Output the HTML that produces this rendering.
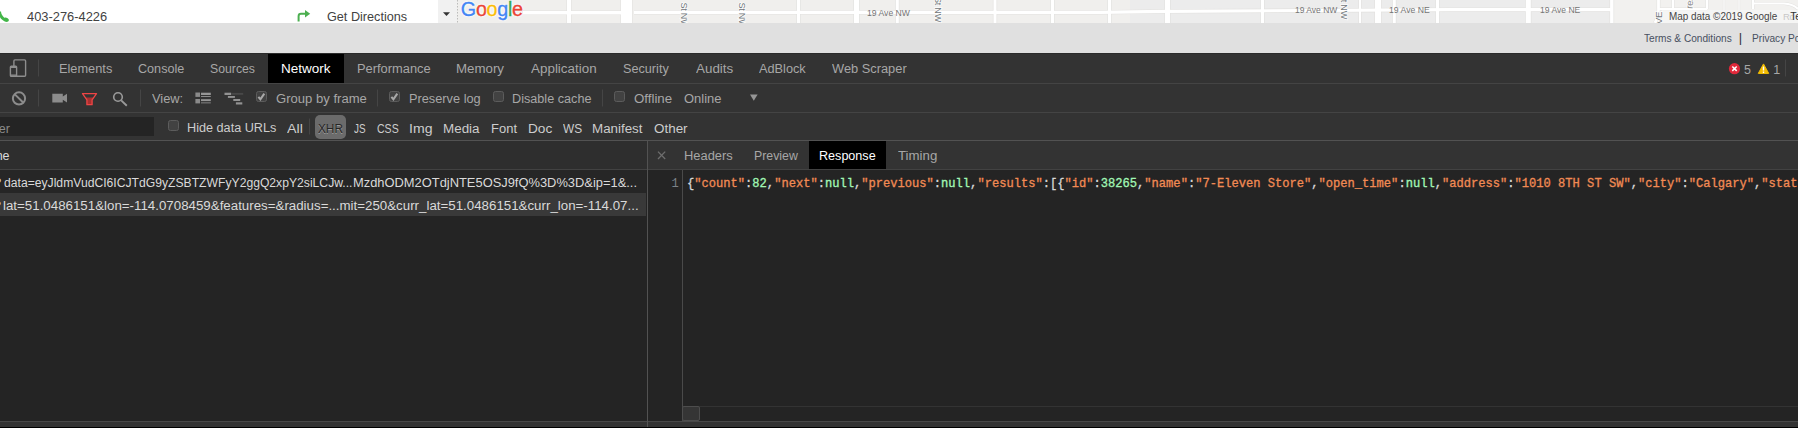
<!DOCTYPE html>
<html><head><meta charset="utf-8"><title>DevTools</title>
<style>
html,body{margin:0;padding:0;}
body{width:1798px;height:428px;overflow:hidden;position:relative;background:#242424;font-family:"Liberation Sans",sans-serif;}
.a{position:absolute;}
.t{position:absolute;white-space:nowrap;line-height:20px;font-weight:400;transform-origin:0 50%;}
.s{font-family:"Liberation Sans",sans-serif;}
.m{font-family:"Liberation Mono",monospace;}
</style></head><body>
<!-- page area -->
<div class="a" style="left:0;top:0;width:438px;height:23px;background:#ffffff;"></div>
<div class="a" style="left:438px;top:0;width:19px;height:23px;background:#f1f1f1;"></div>
<div class="a" style="left:0;top:23px;width:1798px;height:30px;background:#e0e0e0;"></div>
<!-- map svg -->
<svg class="a" style="left:457px;top:0" width="1341" height="23" viewBox="457 0 1341 23">
<rect x="457" y="0" width="1341" height="23" fill="#f0efed"/>
<rect x="1130" y="0" width="484" height="23" fill="#ececec"/>
<rect x="1614" y="0" width="184" height="23" fill="#f2f1ef"/>
<g stroke="#e2e1df" fill="none">
<path d="M523 12.7H621" stroke-width="4.6"/>
<path d="M569 0V23" stroke-width="5.2"/>
<path d="M626.5 0V23" stroke-width="12.2"/>
<path d="M634 12.4H1100L1165 11.4L1450 9.7H1612" stroke-width="4.4"/>
<path d="M798.5 0V23M897.3 0V23M995 0V23M1052.5 0V23M1109.5 0V23M1262.5 0V23M1394.3 0V23M1437.5 0V23" stroke-width="4.2"/>
<path d="M856.5 0V23M1167.5 0V23M1528.3 0V23" stroke-width="6.2"/>
<path d="M1360 0V23" stroke-width="3.2"/>
<path d="M1378 0V23" stroke-width="7.2"/>
<path d="M1611.8 0V23" stroke-width="4.6"/>
<path d="M1658.5 0V8Q1659 15 1655 23" stroke-width="3.8"/>
<path d="M1659 9H1707M1673 0V9M1707 0V9M1753 0V9M1754 3.5H1784Q1793 4 1798 9" stroke-width="3.2"/>
<path d="M1724 0V23M1739 0V23" stroke-width="2.2"/>
</g>
<g stroke="#ffffff" fill="none">
<path d="M523 12.7H621" stroke-width="3.4"/>
<path d="M569 0V23" stroke-width="4"/>
<path d="M626.5 0V23" stroke-width="11"/>
<path d="M634 12.4H1100L1165 11.4L1450 9.7H1612" stroke-width="3.2"/>
<path d="M798.5 0V23M897.3 0V23M995 0V23M1052.5 0V23M1109.5 0V23M1262.5 0V23M1394.3 0V23M1437.5 0V23" stroke-width="3"/>
<path d="M856.5 0V23M1167.5 0V23M1528.3 0V23" stroke-width="5"/>
<path d="M1360 0V23" stroke-width="2"/>
<path d="M1378 0V23" stroke-width="6"/>
<path d="M1611.8 0V23" stroke-width="3.4"/>
<path d="M1658.5 0V8Q1659 15 1655 23" stroke-width="2.8"/>
<path d="M1659 9H1707M1673 0V9M1707 0V9M1753 0V9M1754 3.5H1784Q1793 4 1798 9" stroke-width="2.2"/>
<path d="M1724 0V23M1739 0V23" stroke-width="1.2"/>
</g>
<rect x="1662" y="10" width="136" height="13" fill="#f5f5f5" opacity="0.75"/>
<g fill="#70767a" font-family="Liberation Sans, sans-serif" font-size="9.1" letter-spacing="-0.25" stroke="#fff" stroke-width="1.6" paint-order="stroke" stroke-opacity="0.8">
<text transform="translate(681 2.5) rotate(90)">St NW</text>
<text transform="translate(738.6 2.5) rotate(90)">St NW</text>
<text transform="translate(934.5 -3) rotate(90)">St NW</text>
<text transform="translate(1340.5 -6) rotate(90)">St NW</text>
<text transform="translate(1662 24.3) rotate(-90)" font-size="9.8">VE</text>
<text transform="translate(1692.5 9) rotate(-86)" fill="#8a8a8a" font-size="9.6">res</text>
<text x="1783" y="19.8" fill="#c8c8c8" font-size="9.5" stroke="none">Rd</text>
</g>
<path d="M457 0V23" stroke="#9a9a9a" stroke-width="1.2" stroke-dasharray="1.5 1.5"/>
</svg>
<!-- Google logo -->
<div class="t s" style="left:460.8px;top:-6.1px;font-size:19.8px;letter-spacing:-0.3px;line-height:30px;-webkit-text-stroke:0.35px;text-shadow:0 0 2px #fff,0 0 2px #fff,0 0 3px #fff;"><span style="color:#4285f4">G</span><span style="color:#ea4335">o</span><span style="color:#fbbc05">o</span><span style="color:#4285f4">g</span><span style="color:#34a853">l</span><span style="color:#ea4335">e</span></div>
<!-- devtools -->
<div class="a" style="left:0;top:53px;width:1798px;height:88px;background:#333333;"></div>
<div class="a" style="left:0;top:53px;width:1798px;height:1px;background:#2b2b2b;"></div>
<div class="a" style="left:0;top:83px;width:1798px;height:1px;background:#444444;"></div>
<div class="a" style="left:0;top:112px;width:1798px;height:1px;background:#444444;"></div>
<div class="a" style="left:0;top:140px;width:1798px;height:1px;background:#525252;"></div>
<!-- selected tab -->
<div class="a" style="left:268px;top:54px;width:76px;height:29px;background:#000;"></div>
<!-- filter input -->
<div class="a" style="left:0;top:117px;width:154px;height:19px;background:#242424;"></div>
<!-- XHR pill -->
<div class="a" style="left:315px;top:115px;width:31px;height:24px;background:#6b6b6b;border-radius:5px;"></div>
<!-- grid header -->
<div class="a" style="left:0;top:141px;width:647px;height:28px;background:#2e2e2e;"></div>
<div class="a" style="left:648px;top:141px;width:1150px;height:28px;background:#333333;"></div>
<div class="a" style="left:0;top:169px;width:1798px;height:1px;background:#424242;"></div>
<div class="a" style="left:0;top:170px;width:646px;height:23px;background:#262626;"></div>
<div class="a" style="left:0;top:193px;width:646px;height:23px;background:#393939;"></div>
<!-- splitter -->
<div class="a" style="left:647px;top:141px;width:1px;height:286px;background:#525252;z-index:2"></div>
<!-- response tab selected -->
<div class="a" style="left:809px;top:141px;width:77px;height:28px;background:#000;"></div>
<!-- gutter border -->
<div class="a" style="left:682px;top:170px;width:1px;height:251px;background:#4a4a4a;"></div>
<!-- h scrollbar -->
<div class="a" style="left:684px;top:406px;width:1114px;height:1px;background:#333;"></div>
<div class="a" style="left:682px;top:406px;width:18px;height:15px;background:#353535;border:1px solid #4d4d4d;border-radius:2px;box-sizing:border-box;"></div>
<!-- bottom bar -->
<div class="a" style="left:0;top:421px;width:1798px;height:7px;background:#333;"></div>
<div class="a" style="left:0;top:421px;width:1798px;height:1px;background:#484848;"></div>
<div class="a" style="left:0;top:427px;width:1798px;height:1px;background:#000;"></div>
<svg class="a" style="left:0;top:0" width="1798" height="428" viewBox="0 0 1798 428">
<!-- phone -->
<path d="M0 11.4L1 11.6C1.1 14 2.3 16.1 4.3 17.7L5.3 17.5C6.4 17.3 7.7 18.1 8.6 19.2C9.1 19.9 8.9 20.9 8.1 21.5C7.1 22.1 5.9 22 4.8 21.5C2.6 20.4 0.9 18.9 0 17.3Z" fill="#43b649"/>
<!-- directions arrow -->
<path d="M298.6 21.6V16.2Q298.6 13.8 301 13.8H305.6" fill="none" stroke="#4caf50" stroke-width="2"/>
<path d="M305 10L310.2 13.8L305 17.6Z" fill="#4caf50"/>
<!-- dropdown arrow -->
<path d="M443 12.2H450L446.5 16Z" fill="#333"/>
<!-- device icon -->
<rect x="13.9" y="59.9" width="11.7" height="16.3" rx="1" fill="none" stroke="#8e8e8e" stroke-width="1.4"/>
<rect x="10.4" y="66.3" width="6.2" height="9.9" rx="0.8" fill="#333" stroke="#8e8e8e" stroke-width="1.4"/>
<path d="M10.4 67.4H16.6M10.4 75.2H16.6" stroke="#8e8e8e" stroke-width="1.2"/>
<!-- separators -->
<g stroke="#454545" stroke-width="1">
<path d="M38.5 59.5V76.5M1785.5 59.5V76.5M38.5 89.5V106.5M140.5 89.5V106.5M377.5 89.5V106.5M602.5 89.5V106.5M309.5 118.5V134.5"/>
</g>
<!-- clear icon -->
<circle cx="19" cy="98.4" r="6.1" fill="none" stroke="#8c8c8c" stroke-width="2"/>
<path d="M14.6 94.1L23.4 102.7" stroke="#8c8c8c" stroke-width="2"/>
<!-- camera -->
<path d="M52.3 93.8H62.8V96.6L67 93.8V102.6L62.8 99.8V102.6H52.3Z" fill="#8c8c8c"/>
<!-- filter (red) -->
<path d="M85.4 97.6H93.6L92 99.8V104.6H87V99.8Z" fill="#a83030"/>
<path d="M82.5 93.6H96.5L92.1 99.8V104.7H86.9V99.8Z" fill="none" stroke="#ee4545" stroke-width="1.3" stroke-linejoin="round"/>
<!-- search -->
<circle cx="118" cy="97" r="4.3" fill="none" stroke="#9a9a9a" stroke-width="1.6"/>
<path d="M121.2 100.4L126.8 105.8" stroke="#9a9a9a" stroke-width="1.9"/>
<!-- list icon -->
<g fill="#8a8a8a">
<rect x="195.4" y="92.5" width="4.6" height="4.4"/><rect x="201" y="92.7" width="9.8" height="2.3" fill="#969696"/><rect x="201" y="96" width="9.8" height="0.9" fill="#969696"/>
<rect x="195.4" y="99" width="4.6" height="4.4"/><rect x="201" y="99.2" width="9.8" height="1.9" fill="#969696"/><rect x="201" y="102.3" width="9.8" height="1.1" fill="#7c7c7c"/>
</g>
<!-- waterfall icon -->
<g>
<rect x="224.5" y="92.7" width="6.6" height="2.3" fill="#929292"/><rect x="231.1" y="92.9" width="12.1" height="1.9" fill="#484848"/>
<rect x="227.9" y="96" width="7" height="1.9" fill="#929292"/>
<rect x="233.3" y="99" width="6.9" height="2" fill="#929292"/>
<rect x="235.9" y="102.3" width="6.4" height="2.2" fill="#929292"/>
</g>
<!-- online dropdown triangle -->
<path d="M750 94.4H757.6L753.8 100.8Z" fill="#969696"/>
<!-- checkboxes -->
<g fill="#424242" stroke="#5c5c5c" stroke-width="1">
<rect x="256.5" y="91.5" width="10" height="10" rx="2"/>
<rect x="389.5" y="91.5" width="10" height="10" rx="2"/>
<rect x="493.5" y="91.5" width="10" height="10" rx="2"/>
<rect x="614.5" y="91.5" width="10" height="10" rx="2"/>
<rect x="168.5" y="120.5" width="10" height="10" rx="2"/>
</g>
<g fill="none" stroke="#a8a8a8" stroke-width="2.1">
<path d="M258.4 96.9L260.4 99.3L264.3 93.7"/>
<path d="M391.4 96.9L393.4 99.3L397.3 93.7"/>
</g>
<!-- close x -->
<path d="M658 151.6L665.2 159M665.2 151.6L658 159" stroke="#6e6e6e" stroke-width="1.3"/>
<!-- error icon -->
<circle cx="1734.5" cy="68.7" r="5.6" fill="#e0283a"/>
<path d="M1732.3 66.5L1736.7 70.9M1736.7 66.5L1732.3 70.9" stroke="#fff" stroke-width="1.5"/>
<!-- warning icon -->
<path d="M1763.5 63.9L1768.7 73.4H1758.3Z" fill="#f4bd00" stroke="#f4bd00" stroke-width="1" stroke-linejoin="round"/>
<path d="M1763.5 66.6V70.6M1763.5 71.6V73" stroke="#fff" stroke-width="1.4"/>
</svg>

<span class="t s" style="left:27.00px;top:6.50px;font-size:13px;color:#424242;letter-spacing:0.000px;transform:scaleX(0.9897);">403-276-4226</span>
<span class="t s" style="left:327.40px;top:6.50px;font-size:13px;color:#424242;letter-spacing:0.000px;transform:scaleX(0.9727);">Get Directions</span>
<span class="t s" style="left:1644.10px;top:27.98px;font-size:11.6px;color:#485060;letter-spacing:0.000px;transform:scaleX(0.8727);">Terms &amp; Conditions</span>
<span class="t s" style="left:1738.75px;top:28.00px;font-size:13px;color:#333;letter-spacing:0.000px;">|</span>
<span class="t s" style="left:1752.00px;top:27.98px;font-size:11.6px;color:#485060;letter-spacing:0.000px;transform:scaleX(0.8750);">Privacy Policy</span>
<span class="t s" style="left:1669.10px;top:7.00px;font-size:10.4px;color:#444;letter-spacing:0.000px;transform:scaleX(0.9543);">Map data ©2019 Google</span>
<span class="t s" style="left:1790.15px;top:7.00px;font-size:10.4px;color:#333;letter-spacing:0.000px;">Te</span>
<span class="t s" style="left:866.90px;top:2.88px;font-size:9.3px;color:#757575;letter-spacing:0.000px;transform:scaleX(0.9262);">19 Ave NW</span>
<span class="t s" style="left:1294.50px;top:0.28px;font-size:9.3px;color:#757575;letter-spacing:0.000px;transform:scaleX(0.9135);">19 Ave NW</span>
<span class="t s" style="left:1388.50px;top:-0.32px;font-size:9.3px;color:#757575;letter-spacing:0.000px;transform:scaleX(0.9303);">19 Ave NE</span>
<span class="t s" style="left:1539.90px;top:-0.32px;font-size:9.3px;color:#757575;letter-spacing:0.000px;transform:scaleX(0.9212);">19 Ave NE</span>
<span class="t s" style="left:58.58px;top:58.67px;font-size:12.5px;color:#a7a7a7;letter-spacing:0.000px;transform:scaleX(1.0225);">Elements</span>
<span class="t s" style="left:137.60px;top:58.67px;font-size:12.5px;color:#a7a7a7;letter-spacing:0.000px;transform:scaleX(1.0085);">Console</span>
<span class="t s" style="left:210.20px;top:58.67px;font-size:12.5px;color:#a7a7a7;letter-spacing:0.000px;transform:scaleX(0.9801);">Sources</span>
<span class="t s" style="left:356.87px;top:58.67px;font-size:12.5px;color:#a7a7a7;letter-spacing:0.000px;transform:scaleX(1.0297);">Performance</span>
<span class="t s" style="left:455.84px;top:58.67px;font-size:12.5px;color:#a7a7a7;letter-spacing:0.000px;transform:scaleX(1.0626);">Memory</span>
<span class="t s" style="left:531.20px;top:58.67px;font-size:12.5px;color:#a7a7a7;letter-spacing:0.000px;transform:scaleX(1.0735);">Application</span>
<span class="t s" style="left:623.40px;top:58.67px;font-size:12.5px;color:#a7a7a7;letter-spacing:0.000px;transform:scaleX(1.0130);">Security</span>
<span class="t s" style="left:695.90px;top:58.67px;font-size:12.5px;color:#a7a7a7;letter-spacing:0.000px;transform:scaleX(1.0727);">Audits</span>
<span class="t s" style="left:758.90px;top:58.67px;font-size:12.5px;color:#a7a7a7;letter-spacing:0.000px;transform:scaleX(1.0192);">AdBlock</span>
<span class="t s" style="left:831.90px;top:58.67px;font-size:12.5px;color:#a7a7a7;letter-spacing:0.000px;transform:scaleX(1.0268);">Web Scraper</span>
<span class="t s" style="left:280.62px;top:58.67px;font-size:12.5px;color:#ffffff;letter-spacing:0.000px;transform:scaleX(1.0791);">Network</span>
<span class="t s" style="left:1744.05px;top:59.67px;font-size:12.5px;color:#a7a7a7;letter-spacing:0.000px;">5</span>
<span class="t s" style="left:1773.30px;top:59.67px;font-size:12.5px;color:#a7a7a7;letter-spacing:0.000px;">1</span>
<span class="t s" style="left:151.80px;top:88.67px;font-size:12.5px;color:#a7a7a7;letter-spacing:0.000px;transform:scaleX(1.0279);">View:</span>
<span class="t s" style="left:276.30px;top:88.67px;font-size:12.5px;color:#a7a7a7;letter-spacing:0.000px;transform:scaleX(1.0462);">Group by frame</span>
<span class="t s" style="left:408.88px;top:88.67px;font-size:12.5px;color:#a7a7a7;letter-spacing:0.000px;transform:scaleX(1.0214);">Preserve log</span>
<span class="t s" style="left:512.29px;top:88.67px;font-size:12.5px;color:#a7a7a7;letter-spacing:0.000px;transform:scaleX(1.0121);">Disable cache</span>
<span class="t s" style="left:634.30px;top:88.67px;font-size:12.5px;color:#a7a7a7;letter-spacing:0.000px;transform:scaleX(1.0626);">Offline</span>
<span class="t s" style="left:684.20px;top:88.67px;font-size:12.5px;color:#a7a7a7;letter-spacing:0.000px;transform:scaleX(1.0365);">Online</span>
<span class="t s" style="left:-1.23px;top:118.67px;font-size:12.5px;color:#8a8a8a;letter-spacing:0.000px;">er</span>
<span class="t s" style="left:187.49px;top:117.67px;font-size:12.5px;color:#cdcdcd;letter-spacing:0.000px;transform:scaleX(1.0128);">Hide data URLs</span>
<span class="t s" style="left:286.80px;top:118.67px;font-size:12.5px;color:#cdcdcd;letter-spacing:0.000px;transform:scaleX(1.1438);">All</span>
<span class="t s" style="left:354.30px;top:118.67px;font-size:12.5px;color:#cdcdcd;letter-spacing:0.000px;transform:scaleX(0.7930);">JS</span>
<span class="t s" style="left:377.30px;top:118.67px;font-size:12.5px;color:#cdcdcd;letter-spacing:0.000px;transform:scaleX(0.8437);">CSS</span>
<span class="t s" style="left:409.27px;top:118.67px;font-size:12.5px;color:#cdcdcd;letter-spacing:0.000px;transform:scaleX(1.1264);">Img</span>
<span class="t s" style="left:443.33px;top:118.67px;font-size:12.5px;color:#cdcdcd;letter-spacing:0.000px;transform:scaleX(1.0727);">Media</span>
<span class="t s" style="left:490.66px;top:118.67px;font-size:12.5px;color:#cdcdcd;letter-spacing:0.000px;transform:scaleX(1.0391);">Font</span>
<span class="t s" style="left:527.71px;top:118.67px;font-size:12.5px;color:#cdcdcd;letter-spacing:0.000px;transform:scaleX(1.0916);">Doc</span>
<span class="t s" style="left:562.50px;top:118.67px;font-size:12.5px;color:#cdcdcd;letter-spacing:0.000px;transform:scaleX(0.9496);">WS</span>
<span class="t s" style="left:591.93px;top:118.67px;font-size:12.5px;color:#cdcdcd;letter-spacing:0.000px;transform:scaleX(1.0691);">Manifest</span>
<span class="t s" style="left:653.80px;top:118.67px;font-size:12.5px;color:#cdcdcd;letter-spacing:0.000px;transform:scaleX(1.0740);">Other</span>
<span class="t s" style="left:318.30px;top:118.67px;font-size:12.5px;color:#262626;letter-spacing:0.000px;text-shadow:0 1px 0 rgba(255,255,255,0.35);transform:scaleX(0.9445);">XHR</span>
<span class="t s" style="left:-4.33px;top:145.67px;font-size:12.5px;color:#dadada;letter-spacing:0.000px;">ne</span>
<span class="t s" style="left:4.00px;top:172.67px;font-size:12.5px;color:#dadada;letter-spacing:0.000px;transform:scaleX(0.9724);">data=eyJldmVudCI6ICJTdG9yZSBTZWFyY2ggQ2xpY2siLCJw...</span>
<span class="t s" style="left:353.07px;top:172.67px;font-size:12.5px;color:#dadada;letter-spacing:0.000px;transform:scaleX(1.0311);">MzdhODM2OTdjNTE5OSJ9fQ%3D%3D&amp;ip=1&amp;...</span>
<span class="t s" style="left:2.90px;top:195.67px;font-size:12.5px;color:#dadada;letter-spacing:0.000px;transform:scaleX(1.0649);">lat=51.0486151&amp;lon=-114.0708459&amp;features=&amp;radius=...mit=250&amp;curr_lat=51.0486151&amp;curr_lon=-114.07...</span>
<span class="t s" style="left:-5.75px;top:172.67px;font-size:12.5px;color:#dadada;letter-spacing:0.000px;">?</span>
<span class="t s" style="left:-5.90px;top:195.67px;font-size:12.5px;color:#dadada;letter-spacing:0.000px;">?</span>
<span class="t s" style="left:684.07px;top:145.67px;font-size:12.5px;color:#a7a7a7;letter-spacing:0.000px;transform:scaleX(1.0305);">Headers</span>
<span class="t s" style="left:753.71px;top:145.67px;font-size:12.5px;color:#a7a7a7;letter-spacing:0.000px;transform:scaleX(0.9858);">Preview</span>
<span class="t s" style="left:897.60px;top:145.67px;font-size:12.5px;color:#a7a7a7;letter-spacing:0.000px;transform:scaleX(1.0596);">Timing</span>
<span class="t s" style="left:819.29px;top:145.67px;font-size:12.5px;color:#ffffff;letter-spacing:0.000px;transform:scaleX(1.0066);">Response</span>
<span class="t m" style="left:687.00px;top:173.78px;font-size:12.1px;color:#d8d8d8;letter-spacing:-0.000px;-webkit-text-stroke:0.3px;"><span style="color:#d8d8d8">{</span><span style="color:#f28b54">"count"</span><span style="color:#d8d8d8">:</span><span style="color:#a1f7b5">82</span><span style="color:#d8d8d8">,</span><span style="color:#f28b54">"next"</span><span style="color:#d8d8d8">:</span><span style="color:#a1f7b5">null</span><span style="color:#d8d8d8">,</span><span style="color:#f28b54">"previous"</span><span style="color:#d8d8d8">:</span><span style="color:#a1f7b5">null</span><span style="color:#d8d8d8">,</span><span style="color:#f28b54">"results"</span><span style="color:#d8d8d8">:[{</span><span style="color:#f28b54">"id"</span><span style="color:#d8d8d8">:</span><span style="color:#a1f7b5">38265</span><span style="color:#d8d8d8">,</span><span style="color:#f28b54">"name"</span><span style="color:#d8d8d8">:</span><span style="color:#f28b54">"7-Eleven Store"</span><span style="color:#d8d8d8">,</span><span style="color:#f28b54">"open_time"</span><span style="color:#d8d8d8">:</span><span style="color:#a1f7b5">null</span><span style="color:#d8d8d8">,</span><span style="color:#f28b54">"address"</span><span style="color:#d8d8d8">:</span><span style="color:#f28b54">"1010 8TH ST SW"</span><span style="color:#d8d8d8">,</span><span style="color:#f28b54">"city"</span><span style="color:#d8d8d8">:</span><span style="color:#f28b54">"Calgary"</span><span style="color:#d8d8d8">,</span><span style="color:#f28b54">"state"</span></span>
<span class="t m" style="left:671.60px;top:173.78px;font-size:12.1px;color:#7b8288;letter-spacing:0.000px;">1</span>
</body></html>
